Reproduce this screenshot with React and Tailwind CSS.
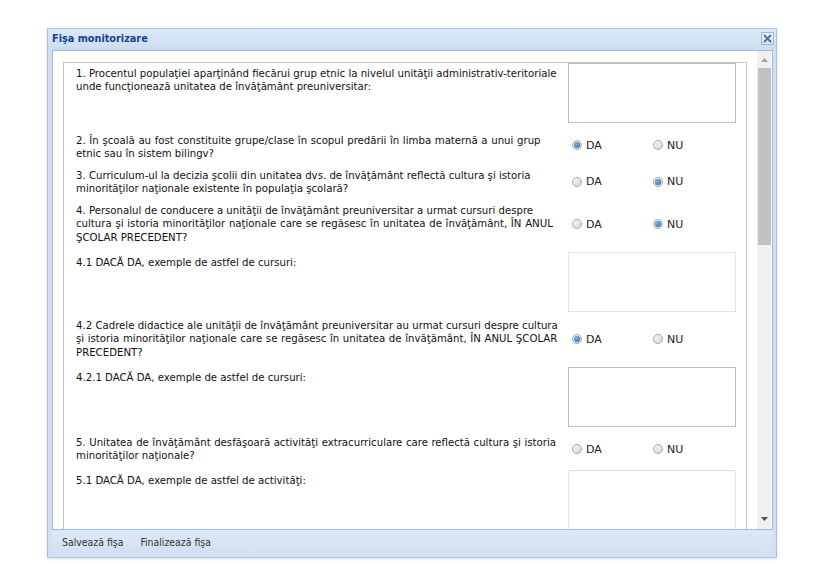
import React from "react";

const Radio = ({ checked, label }) => (
  <div className="flex items-center w-[81px]">
    <span className="w-[10px] h-[10px] rounded-full border border-[#a8a8a8] bg-[linear-gradient(135deg,#f7f7f7,#d6d6d6)] flex items-center justify-center">
      {checked && (
        <span className="w-[6px] h-[6px] rounded-full bg-[radial-gradient(circle_at_40%_40%,#7bb8ec,#1b5a9e)]" />
      )}
    </span>
    <span className="ml-[4px] font-['DejaVu_Sans',sans-serif] text-[11px] text-[#222] leading-none">{label}</span>
  </div>
);

const Label = ({ lines, top }) => (
  <div className={`w-[492px] shrink-0 whitespace-nowrap leading-[13.3px] text-[#111] ${top ? "pt-[4px]" : ""}`}>
    {lines.map((l, i) =>
      typeof l === "string" ? (
        <div key={i}>{l}</div>
      ) : (
        <div key={i} className={l.c}>
          {l.t}
        </div>
      )
    )}
  </div>
);

const AreaRow = ({ lines, enabled, mt }) => (
  <div className={`flex items-start ${mt}`}>
    <Label lines={lines} top />
    <div
      className={`w-[168px] h-[60px] shrink-0 border bg-white ${enabled ? "border-[#bdbdbd]" : "border-[#e3e3e3]"}`}
    />
  </div>
);

const RadioRow = ({ lines, value, mt, rc = "" }) => (
  <div className={`flex items-center ${mt}`}>
    <Label lines={lines} />
    <div className={`flex items-center pl-[4px] ${rc}`}>
      <Radio checked={value === "DA"} label="DA" />
      <Radio checked={value === "NU"} label="NU" />
    </div>
  </div>
);

export default function App() {
  return (
    <div className="w-[820px] h-[585px] bg-white pt-[28px] pl-[47px] font-['DejaVu_Sans_Condensed','DejaVu_Sans',sans-serif] text-[11.3px]">
      <div className="w-[730px] h-[530px] border border-[#a9c2e3] bg-[#d3e0f1] flex flex-col shadow-[0_1px_3px_rgba(0,0,0,0.12)]">
        {/* header */}
        <div className="h-[21px] shrink-0 flex items-center justify-between pl-[4px] pr-[2px] bg-[linear-gradient(#dce8f6,#cddcef)]">
          <span className="font-bold text-[#15428b] text-[10.8px]">Fişa monitorizare</span>
          <div className="w-[13px] h-[13px] border border-[#9ab6dd] bg-[linear-gradient(#eef4fb,#d4e2f3)] flex items-center justify-center mb-[2px]">
            <svg width="9" height="9" viewBox="0 0 9 9">
              <path d="M1.5 1.5 L7.5 7.5 M7.5 1.5 L1.5 7.5" stroke="#4b6d9c" strokeWidth="1.8" strokeLinecap="round" />
            </svg>
          </div>
        </div>
        {/* body */}
        <div className="flex-1 min-h-0 flex ml-[4px] mr-[3px] border-l border-t border-r border-[#99bbe8] bg-white overflow-hidden">
          <div className="flex-1 min-w-0 pl-[10px] pt-[11px] pr-[10px] overflow-hidden">
            <div className="border-l border-t border-r border-[#c6c6c6] pl-[12px] pr-[11px] h-[600px]">
              <AreaRow
                enabled
                mt=""
                lines={[
                  "1. Procentul populaţiei aparţinând fiecărui grup etnic la nivelul unităţii administrativ-teritoriale",
                  "unde funcţionează unitatea de învăţământ preuniversitar:",
                ]}
              />
              <RadioRow
                mt="mt-[11px]"
                value="DA"
                rc="mb-[4px]"
                lines={[
                  { t: "2. În şcoală au fost constituite grupe/clase în scopul predării în limba maternă a unui grup", c: "[word-spacing:0.4px]" },
                  "etnic sau în sistem bilingv?",
                ]}
              />
              <RadioRow
                mt="mt-[8px]"
                value="NU"
                lines={[
                  "3. Curriculum-ul la decizia şcolii din unitatea dvs. de învăţământ reflectă cultura şi istoria",
                  "minorităţilor naţionale existente în populaţia şcolară?",
                ]}
              />
              <RadioRow
                mt="mt-[9px]"
                value="NU"
                lines={[
                  "4. Personalul de conducere a unităţii de învăţământ preuniversitar a urmat cursuri despre",
                  { t: "cultura şi istoria minorităţilor naţionale care se regăsesc în unitatea de învăţământ, ÎN ANUL", c: "[word-spacing:0.5px]" },
                  "ŞCOLAR PRECEDENT?",
                ]}
              />
              <AreaRow mt="mt-[8px]" lines={["4.1 DACĂ DA, exemple de astfel de cursuri:"]} />
              <RadioRow
                mt="mt-[7px]"
                value="DA"
                lines={[
                  "4.2 Cadrele didactice ale unităţii de învăţământ preuniversitar au urmat cursuri despre cultura",
                  { t: "şi istoria minorităţilor naţionale care se regăsesc în unitatea de învăţământ, ÎN ANUL ŞCOLAR", c: "[word-spacing:0.4px]" },
                  "PRECEDENT?",
                ]}
              />
              <AreaRow enabled mt="mt-[8px]" lines={["4.2.1 DACĂ DA, exemple de astfel de cursuri:"]} />
              <RadioRow
                mt="mt-[9px]"
                value=""
                lines={[
                  { t: "5. Unitatea de învăţământ desfăşoară activităţi extracurriculare care reflectă cultura şi istoria", c: "[word-spacing:0.3px]" },
                  "minorităţilor naţionale?",
                ]}
              />
              <AreaRow mt="mt-[7px]" lines={["5.1 DACĂ DA, exemple de astfel de activităţi:"]} />
            </div>
          </div>
          {/* scrollbar */}
          <div className="w-[14px] shrink-0 bg-[#f0f0f0] flex flex-col items-center mr-[1px]">
            <div className="h-[17px] w-full flex items-center justify-center">
              <svg width="7" height="4" viewBox="0 0 7 4">
                <path d="M0 4 L3.5 0 L7 4 Z" fill="#a0a0a0" />
              </svg>
            </div>
            <div className="h-[177px] w-[13px] bg-[#c1c1c1]" />
            <div className="flex-1" />
            <div className="h-[17px] w-full flex items-center justify-center mb-[2px]">
              <svg width="7" height="4" viewBox="0 0 7 4">
                <path d="M0 0 L7 0 L3.5 4 Z" fill="#505050" />
              </svg>
            </div>
          </div>
        </div>
        {/* footer */}
        <div className="h-[24px] shrink-0 mx-[4px] mr-[3px] border-t border-[#99bbe8] bg-[linear-gradient(#dee8f5,#d3e0f1)] flex items-center pl-[10px] gap-[17px] text-[#333] text-[10.4px] pt-[2px]">
          <span>Salvează fişa</span>
          <span>Finalizează fişa</span>
        </div>
        <div className="h-[4px] shrink-0" />
      </div>
    </div>
  );
}
